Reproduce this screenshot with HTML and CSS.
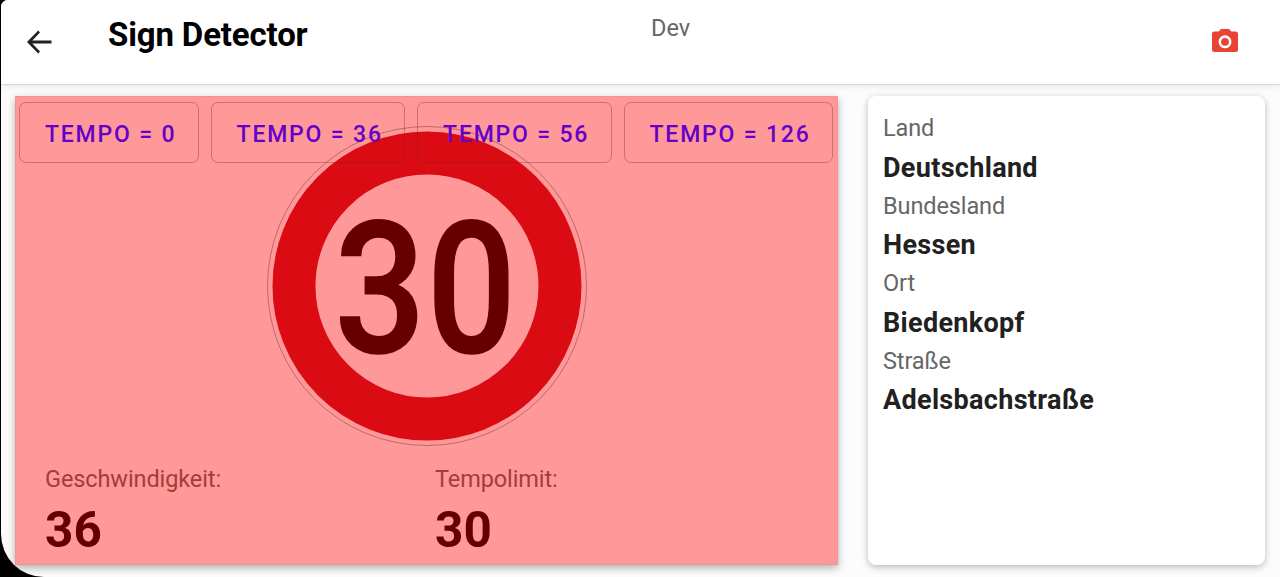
FILE: index.html
```html
<!DOCTYPE html>
<html lang="de">
<head>
<meta charset="utf-8">
<title>Sign Detector</title>
<link rel="stylesheet" href="styles.css">
</head>
<body>
<div class="app">
  <header class="bar">
    <svg class="back" viewBox="0 0 25 24"><path d="M24.500 10.600H5.300L13 2.500 11.200.6 0 12l11.200 11.400L13 21.500l-7.700-8.100h19.200z"/></svg>
    <h1 class="title">Sign Detector</h1>
    <span class="mode">Dev</span>
    <svg class="camera" viewBox="0 0 26 24"><path fill-rule="evenodd" d="M9 0h8l2.400 2.600H23.500a2.500 2.500 0 0 1 2.500 2.500V20.500a2.500 2.500 0 0 1-2.500 2.500H2.500a2.500 2.500 0 0 1-2.500-2.500V5.100a2.500 2.500 0 0 1 2.500-2.500h4.100zM13 6.300a6.500 6.500 0 1 0 0 13 6.500 6.500 0 0 0 0-13zm0 2.600a3.900 3.900 0 1 1 0 7.800 3.900 3.900 0 0 1 0-7.800z"/></svg>
  </header>
  <main class="content">
    <section class="panel">
      <svg class="sign" viewBox="0 0 320 320">
        <circle class="sign-edge" cx="160" cy="160" r="159.500"/>
        <circle class="sign-ring" cx="160" cy="160" r="133"/>
        <g class="sign-number">
          <text transform="translate(113 226) scale(.87 1)">3</text>
          <text transform="translate(204.500 226) scale(.85 1)">0</text>
        </g>
      </svg>
      <div class="buttons">
        <button class="tempo">TEMPO = 0</button>
        <button class="tempo">TEMPO = 36</button>
        <button class="tempo">TEMPO = 56</button>
        <button class="tempo">TEMPO = 126</button>
      </div>
      <div class="stats">
        <div class="stat"><div class="stat-label">Geschwindigkeit:</div><div class="stat-value">36</div></div>
        <div class="stat"><div class="stat-label">Tempolimit:</div><div class="stat-value">30</div></div>
      </div>
    </section>
    <aside class="place">
      <div class="label">Land</div><div class="value">Deutschland</div>
      <div class="label">Bundesland</div><div class="value">Hessen</div>
      <div class="label">Ort</div><div class="value">Biedenkopf</div>
      <div class="label">Straße</div><div class="value">Adelsbachstraße</div>
    </aside>
  </main>
</div>
</body>
</html>
```
FILE: styles.css
```css
* { box-sizing: border-box; }
body {
  margin: 0;
  height: 577px;
  padding-left: 1px;
  background: #000;
  font-family: Roboto, sans-serif;
  overflow: hidden;
}
.app {
  height: 577px;
  display: flex;
  flex-direction: column;
  background: #fcfcfc;
  border-radius: 7px 0 0 43px;
  overflow: hidden;
}
.bar {
  flex: none;
  height: 84px;
  display: flex;
  align-items: flex-start;
  padding: 0 42px 0 26px;
  background: #fff;
  box-shadow: 0 1px 1px #d8dcdc, 0 2px 8px rgba(0, 0, 0, .08);
}
.back { width: 25px; height: 24px; margin-top: 30px; fill: #222; }
.title {
  width: 543px;
  margin: 16px 0 0 56px;
  font-size: 33px;
  line-height: 38px;
  font-weight: 700;
  letter-spacing: -.15px;
  color: #000;
}
.mode { margin-top: 14px; font-size: 23.5px; line-height: 28px; color: #666; }
.camera { width: 26px; height: 24px; margin: 29px 0 0 auto; fill: #e94335; }
.content {
  flex: 1;
  display: flex;
  gap: 30px;
  padding: 12px 14px 12px;
}
.panel {
  position: relative;
  flex: none;
  width: 823px;
  display: flex;
  flex-direction: column;
  justify-content: space-between;
  padding: 5px 3px 6px;
  background: #f99;
  border: 1px solid #f59393;
  box-shadow: 0 3px 8px rgba(0, 0, 0, .3);
}
.sign { position: absolute; left: 251px; top: 29px; width: 320px; height: 320px; }
.sign-edge { fill: none; stroke: #a75050; stroke-width: .7; }
.sign-ring { fill: none; stroke: #db0b13; stroke-width: 43; }
.sign-number {
  fill: #600;
  stroke: #600;
  stroke-width: 1.5;
  font-family: Roboto, sans-serif;
  font-weight: 500;
  font-size: 184px;
  text-anchor: middle;
}
.buttons { position: relative; display: flex; gap: 11.8px; }
.tempo {
  height: 61px;
  padding: 3px 21.5px 0 25px;
  border: 1px solid rgba(130, 20, 20, .33);
  border-radius: 7px;
  background: none;
  color: #6400c8;
  font: 500 23px Roboto, sans-serif;
  letter-spacing: 1.8px;
  white-space: nowrap;
}
.stats { display: flex; padding-left: 26px; }
.stat { width: 390px; }
.stat-label { font-size: 23.5px; line-height: 28px; letter-spacing: -.1px; color: #a33c3c; }
.stat-value { margin-top: 9px; font-size: 49.5px; line-height: 56px; font-weight: 700; color: #600; }
.place {
  width: 397px;
  padding: 18px 15px;
  background: #fff;
  border-radius: 8px;
  box-shadow: 0 2px 7px rgba(0, 0, 0, .27);
}
.label { height: 38.5px; font-size: 23.5px; line-height: 28px; letter-spacing: -.1px; color: #666; }
.value { height: 39px; font-size: 27px; line-height: 30px; font-weight: 700; letter-spacing: .32px; color: #212121; }
```
